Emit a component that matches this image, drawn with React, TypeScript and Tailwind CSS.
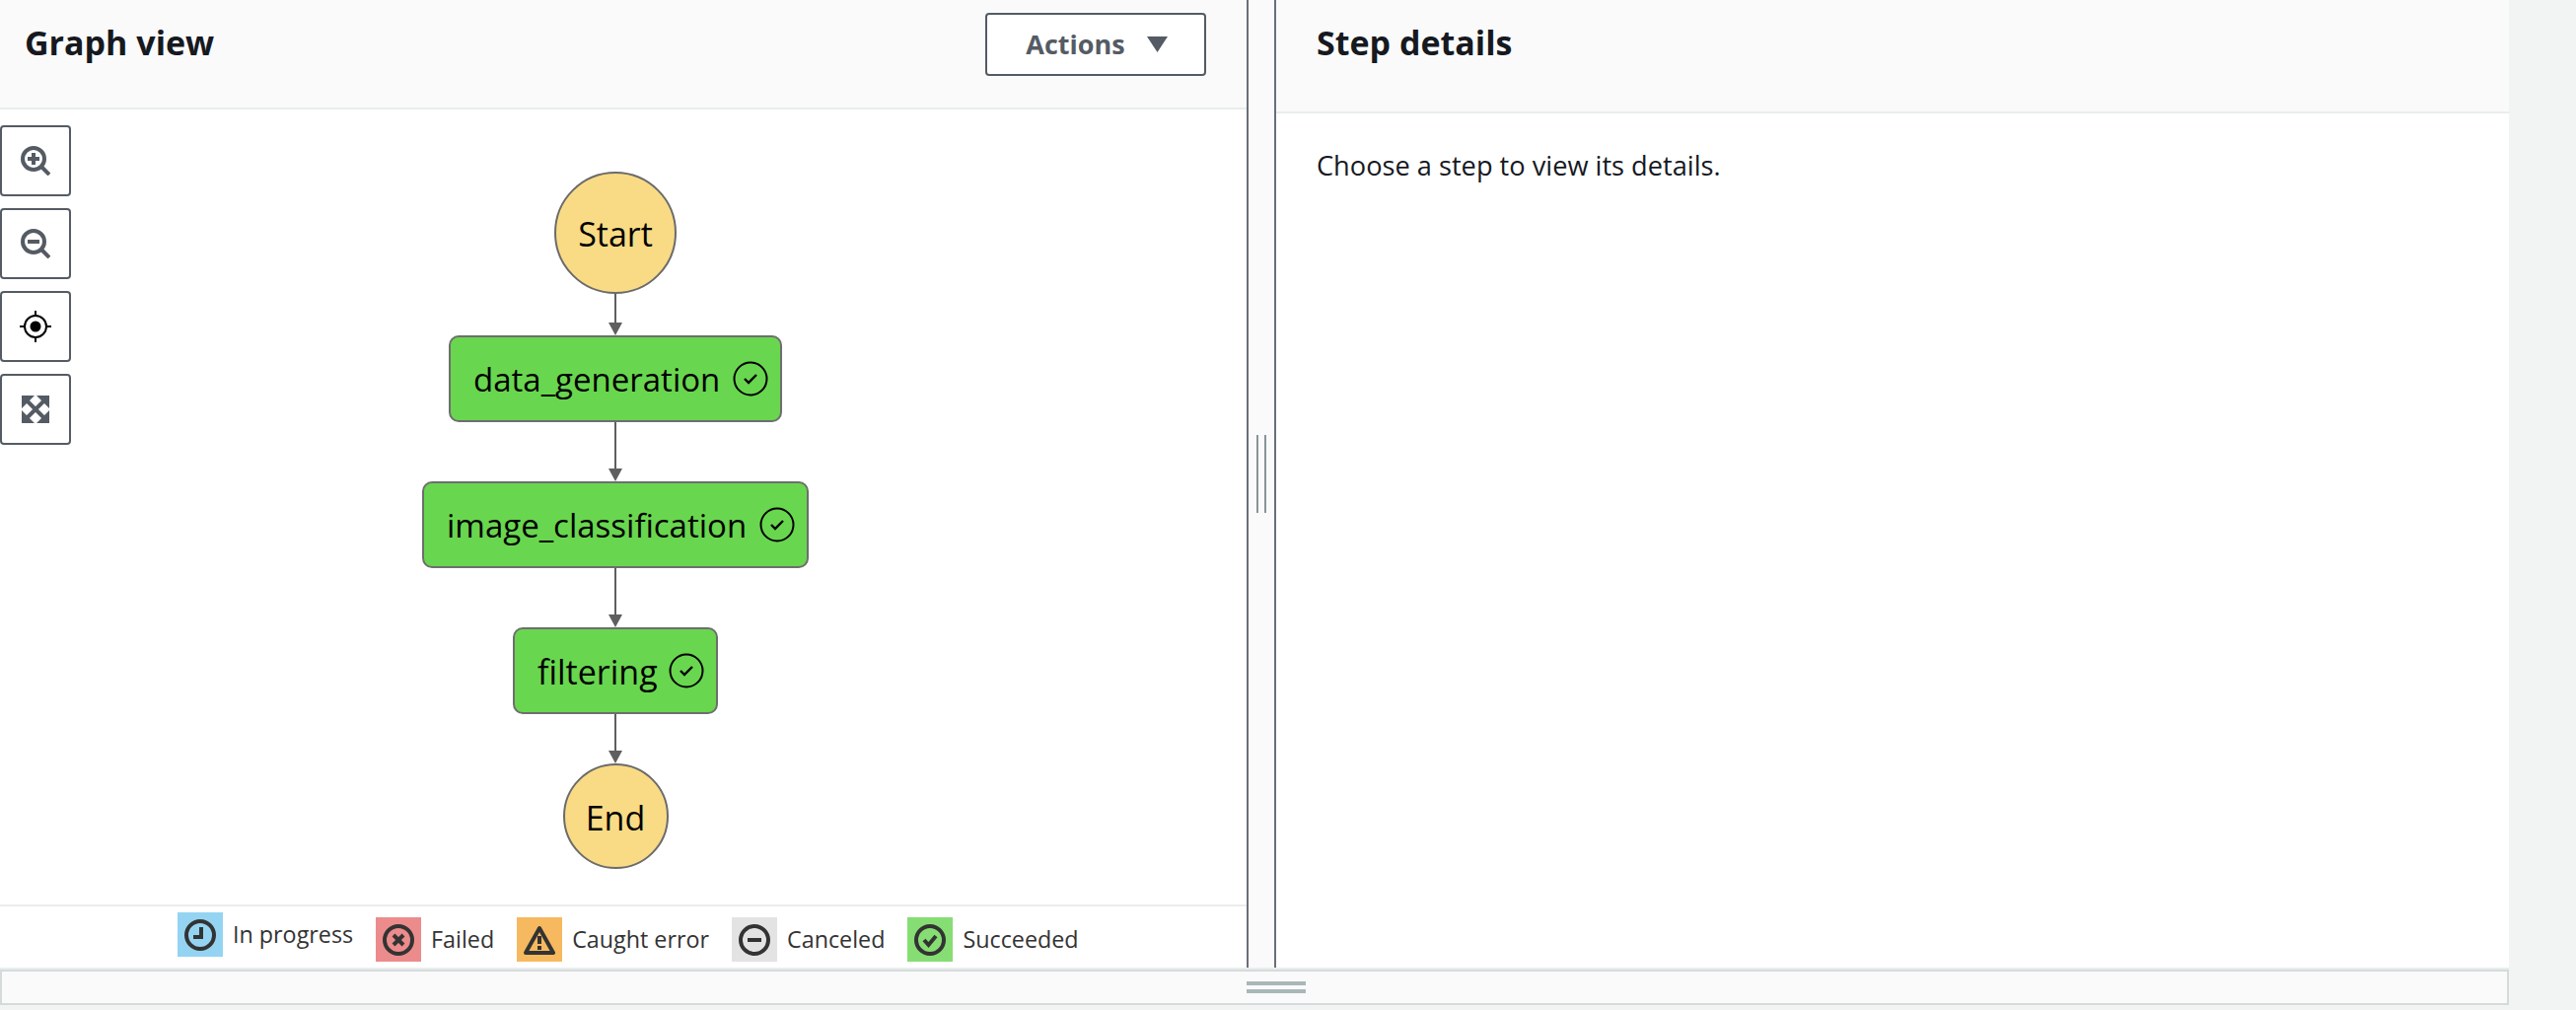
import type { ReactNode } from "react";

const font = "font-['Open_Sans',sans-serif]";

function ZoomIcon({ plus }: { plus?: boolean }) {
  return (
    <svg width="30" height="30" viewBox="0 0 30 30" fill="none" stroke="#545b64">
      <circle cx="13" cy="13" r="11" strokeWidth="4" />
      <path d="M21 21 L29 29" strokeWidth="4" />
      <path d="M7 13 H19" strokeWidth="4" />
      {plus && <path d="M13 7 V19" strokeWidth="4" />}
    </svg>
  );
}

function CenterIcon() {
  return (
    <svg width="32" height="32" viewBox="0 0 32 32" fill="none" stroke="#000">
      <circle cx="16" cy="16" r="11" strokeWidth="2" />
      <circle cx="16" cy="16" r="5.5" fill="#000" stroke="none" />
      <path d="M16 0 V6 M16 26 V32 M0 16 H6 M26 16 H32" strokeWidth="2" />
    </svg>
  );
}

function FitIcon() {
  return (
    <svg width="28" height="28" viewBox="0 0 28 28" fill="#545b64" stroke="none">
      <path d="M0 0 H13 L0 13 Z M28 0 V13 L15 0 Z M0 28 V15 L13 28 Z M28 28 H15 L28 15 Z" />
      <path d="M3 3 L25 25 M25 3 L3 25" stroke="#545b64" strokeWidth="4" />
    </svg>
  );
}

function ToolButton({ children }: { children: ReactNode }) {
  return (
    <button className="flex h-[72px] w-[72px] items-center justify-center rounded-[4px] border-2 border-[#545b64] bg-white">
      {children}
    </button>
  );
}

function Edge({ height }: { height: number }) {
  return (
    <svg width="16" height={height} viewBox={`0 0 16 ${height}`} className="block">
      <path d={`M8 0 V${height - 10}`} stroke="#5f5f5f" strokeWidth="2" />
      <path d={`M1 ${height - 13} H15 L8 ${height} Z`} fill="#5f5f5f" />
    </svg>
  );
}

function Circle({ label, size }: { label: string; size: string }) {
  return (
    <div className={`flex items-center justify-center rounded-full border-2 border-[#6b6b6b] bg-[#f9db85] pt-[3px] text-[34px] text-black ${size}`}>
      {label}
    </div>
  );
}

function Step({ label, width, text }: { label: string; width: string; text: string }) {
  return (
    <div className={`flex h-[88px] items-center justify-between rounded-[10px] border-2 border-[#6e6e6e] bg-[#69d64f] pl-[23px] pr-[12px] text-black ${text} ${width}`}>
      <span className="pt-[2px]">{label}</span>
      <svg width="36" height="36" viewBox="0 0 36 36" fill="none" stroke="#000" strokeWidth="2">
        <circle cx="18" cy="18" r="16.5" />
        <path d="M12 18 L16 22 L24 14" strokeWidth="2.4" />
      </svg>
    </div>
  );
}

function LegendItem({ color, label, up, children }: { color: string; label: string; up?: boolean; children: ReactNode }) {
  return (
    <div className={`flex items-center gap-[10px] ${up ? "-translate-y-[5px]" : ""}`}>
      <div className={`flex h-[45px] w-[46px] items-center justify-center ${color}`}>{children}</div>
      <span className="text-[23.3px] leading-[45px] text-[#333]">{label}</span>
    </div>
  );
}

const legendStroke = { fill: "none", stroke: "#333", strokeWidth: 4 };

export default function App() {
  return (
    <div className={`h-[1024px] w-full overflow-hidden bg-[#f2f3f3] ${font}`}>
      <div className="w-[2544px]">
        <div className="flex h-[981px]">
          {/* graph panel */}
          <div className="flex w-[1264px] flex-col bg-white">
            <div className="flex h-[111px] items-start justify-between border-b-2 border-[#eaeded] bg-[#fafafa] pl-[25px] pr-[41px]">
              <h2 className="mt-[19px] text-[34px] font-bold leading-[48px] text-[#16191f]">Graph view</h2>
              <button className="mt-[13px] flex h-[64px] w-[224px] items-center justify-center gap-[22px] rounded-[4px] border-2 border-[#545b64] bg-white pl-[2px] text-[27px] font-bold text-[#545b64]">
                Actions
                <svg width="21" height="16" viewBox="0 0 21 16" fill="#545b64">
                  <path d="M0 0 H21 L10.5 16 Z" />
                </svg>
              </button>
            </div>
            <div className="relative flex flex-1 flex-col items-center pr-[16px] pt-[63px]">
              <div className="absolute left-0 top-[16px] flex flex-col gap-[12px]">
                <ToolButton><ZoomIcon plus /></ToolButton>
                <ToolButton><ZoomIcon /></ToolButton>
                <ToolButton><CenterIcon /></ToolButton>
                <ToolButton><FitIcon /></ToolButton>
              </div>
              <Circle label="Start" size="h-[124px] w-[124px]" />
              <Edge height={42} />
              <Step label="data_generation" width="w-[338px]" text="text-[33px]" />
              <Edge height={60} />
              <Step label="image_classification" width="w-[392px]" text="text-[33px]" />
              <Edge height={60} />
              <Step label="filtering" width="w-[208px]" text="text-[34px]" />
              <Edge height={50} />
              <Circle label="End" size="h-[107px] w-[107px]" />
            </div>
            {/* legend */}
            <div className="flex h-[64px] items-center gap-[23px] border-t-2 border-[#eaeded] pl-[180px] pt-[5px]">
              <LegendItem up color="bg-[#94d4f2]" label="In progress">
                <svg width="32" height="32" viewBox="0 0 32 32" {...legendStroke}>
                  <circle cx="16" cy="16" r="14" />
                  <path d="M17 8 V18 H9" />
                </svg>
              </LegendItem>
              <LegendItem color="bg-[#ec8b8b]" label="Failed">
                <svg width="32" height="32" viewBox="0 0 32 32" {...legendStroke}>
                  <circle cx="16" cy="16" r="14" />
                  <path d="M11 11 L21 21 M21 11 L11 21" />
                </svg>
              </LegendItem>
              <LegendItem color="bg-[#f6b95f]" label="Caught error">
                <svg width="32" height="32" viewBox="0 0 32 32" {...legendStroke}>
                  <path d="M16 4 L30 29 H2 Z" strokeLinejoin="round" />
                  <path d="M16 12 V20 M16 22 V26" />
                </svg>
              </LegendItem>
              <LegendItem color="bg-[#e3e3e3]" label="Canceled">
                <svg width="32" height="32" viewBox="0 0 32 32" {...legendStroke}>
                  <circle cx="16" cy="16" r="14" />
                  <path d="M9 16 H23" />
                </svg>
              </LegendItem>
              <LegendItem color="bg-[#86dd73]" label="Succeeded">
                <svg width="32" height="32" viewBox="0 0 32 32" {...legendStroke}>
                  <circle cx="16" cy="16" r="14" />
                  <path d="M10 16 L14.5 21 L22 12" />
                </svg>
              </LegendItem>
            </div>
          </div>
          {/* vertical splitter */}
          <div className="flex w-[30px] items-start justify-center gap-[6px] border-x-2 border-[#687078] bg-[#fafafa] pt-[441px]">
            <div className="h-[79px] w-[2px] bg-[#879596]" />
            <div className="h-[79px] w-[2px] bg-[#879596]" />
          </div>
          {/* step details */}
          <div className="flex flex-1 flex-col bg-white">
            <div className="h-[115px] border-b-2 border-[#eaeded] bg-[#fafafa] pl-[41px]">
              <h2 className="mt-[19px] text-[34px] font-bold leading-[48px] text-[#16191f]">Step details</h2>
            </div>
            <p className="pl-[41px] pt-[33px] text-[27.2px] leading-[40px] text-[#16191f]">Choose a step to view its details.</p>
          </div>
        </div>
        {/* bottom splitter */}
        <div className="border-t-2 border-[#eaeded]">
          <div className="flex h-[36px] flex-col items-start justify-center gap-[4px] border-2 border-[#d5dbdb] bg-[#fafafa] pl-[1262px]">
            <div className="h-[4px] w-[60px] bg-[#aab7b8]" />
            <div className="h-[4px] w-[60px] bg-[#aab7b8]" />
          </div>
        </div>
      </div>
    </div>
  );
}
